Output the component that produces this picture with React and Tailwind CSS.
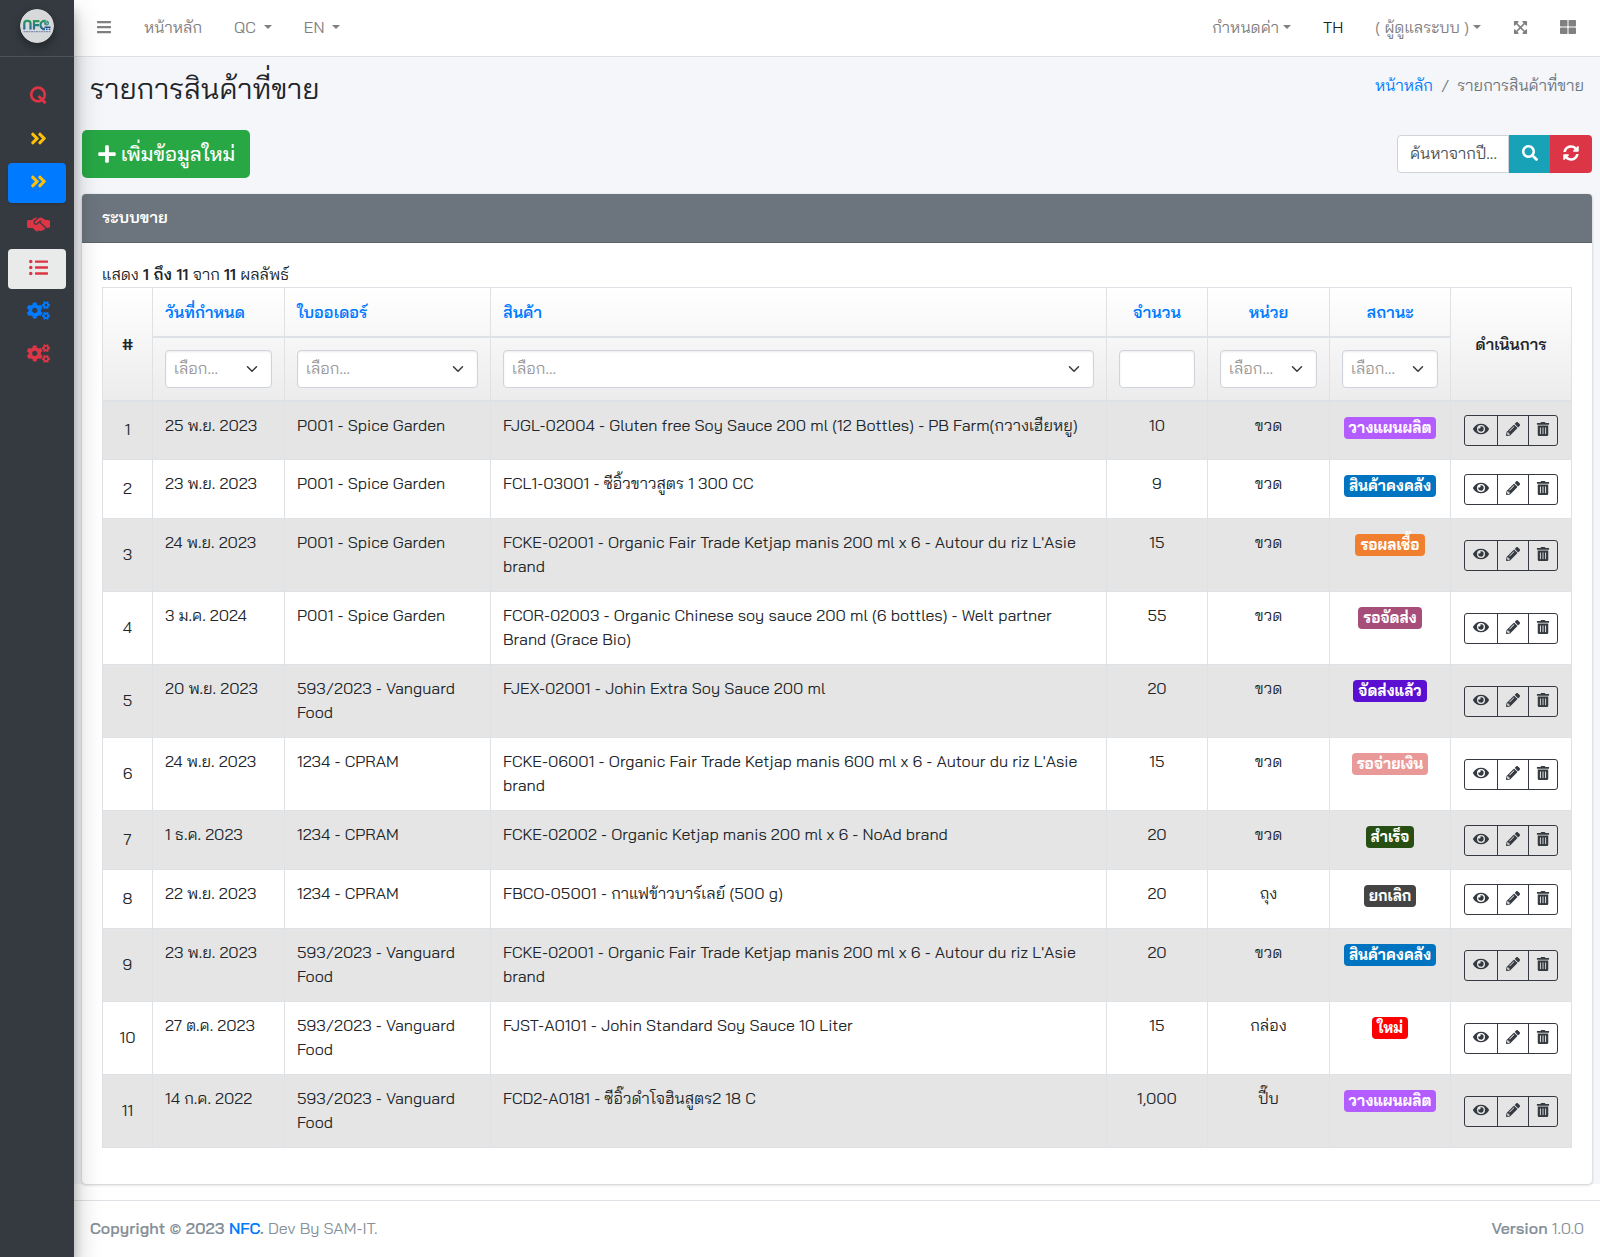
import React from "react";
import {
  FaBars, FaAngleDoubleRight, FaListUl, FaCogs, FaPlus, FaSearch, FaSyncAlt,
  FaExpandArrowsAlt, FaThLarge, FaEye, FaPencilAlt, FaTrashAlt,
} from "react-icons/fa";
import { FaHandshakeSimple } from "react-icons/fa6";

const rows = [
  ["25 พ.ย. 2023", "P001 - Spice Garden", "FJGL-02004 - Gluten free Soy Sauce 200 ml (12 Bottles) - PB Farm(กวางเฮียหยู)", "10", "ขวด", "วางแผนผลิต", "bg-[#b35cff]"],
  ["23 พ.ย. 2023", "P001 - Spice Garden", "FCL1-03001 - ซีอิ้วขาวสูตร 1 300 CC", "9", "ขวด", "สินค้าคงคลัง", "bg-[#0074c1]"],
  ["24 พ.ย. 2023", "P001 - Spice Garden", "FCKE-02001 - Organic Fair Trade Ketjap manis 200 ml x 6 - Autour du riz L'Asie brand", "15", "ขวด", "รอผลเชื้อ", "bg-[#f08030]"],
  ["3 ม.ค. 2024", "P001 - Spice Garden", "FCOR-02003 - Organic Chinese soy sauce 200 ml (6 bottles) - Welt partner Brand (Grace Bio)", "55", "ขวด", "รอจัดส่ง", "bg-[#a64d79]"],
  ["20 พ.ย. 2023", "593/2023 - Vanguard Food", "FJEX-02001 - Johin Extra Soy Sauce 200 ml", "20", "ขวด", "จัดส่งแล้ว", "bg-[#5b0fd0]"],
  ["24 พ.ย. 2023", "1234 - CPRAM", "FCKE-06001 - Organic Fair Trade Ketjap manis 600 ml x 6 - Autour du riz L'Asie brand", "15", "ขวด", "รอจ่ายเงิน", "bg-[#ea9999]"],
  ["1 ธ.ค. 2023", "1234 - CPRAM", "FCKE-02002 - Organic Ketjap manis 200 ml x 6 - NoAd brand", "20", "ขวด", "สำเร็จ", "bg-[#274e13]"],
  ["22 พ.ย. 2023", "1234 - CPRAM", "FBCO-05001 - กาแฟข้าวบาร์เลย์ (500 g)", "20", "ถุง", "ยกเลิก", "bg-[#444444]"],
  ["23 พ.ย. 2023", "593/2023 - Vanguard Food", "FCKE-02001 - Organic Fair Trade Ketjap manis 200 ml x 6 - Autour du riz L'Asie brand", "20", "ขวด", "สินค้าคงคลัง", "bg-[#0074c1]"],
  ["27 ต.ค. 2023", "593/2023 - Vanguard Food", "FJST-A0101 - Johin Standard Soy Sauce 10 Liter", "15", "กล่อง", "ใหม่", "bg-[#ff0000]"],
  ["14 ก.ค. 2022", "593/2023 - Vanguard Food", "FCD2-A0181 - ซีอิ๊วดำโจฮินสูตร2 18 C", "1,000", "ปี๊บ", "วางแผนผลิต", "bg-[#b35cff]"],
];

const columns = ["วันที่กำหนด", "ใบออเดอร์", "สินค้า", "จำนวน", "หน่วย", "สถานะ"];

const menu = [
  { label: "QC", tone: "text-[#dc3545]", icon: <QMark /> },
  { label: "ขั้นตอน 1", tone: "text-[#ffc107]", icon: <FaAngleDoubleRight size={19} /> },
  { label: "ขั้นตอน 2", tone: "bg-[#007bff] text-[#ffc107] shadow", icon: <FaAngleDoubleRight size={19} /> },
  { label: "ลูกค้า", tone: "text-[#dc3545]", icon: <FaHandshakeSimple size={23} /> },
  { label: "รายการ", tone: "bg-[#e9ebea] text-[#dc3545]", icon: <FaListUl size={19} /> },
  { label: "ตั้งค่า", tone: "text-[#007bff]", icon: <FaCogs size={23} /> },
  { label: "ระบบ", tone: "text-[#dc3545]", icon: <FaCogs size={23} /> },
];

function QMark() {
  return (
    <svg width="18" height="18" viewBox="0 0 18 18" fill="none" stroke="currentColor" aria-hidden="true">
      <circle cx="9" cy="8.5" r="6.800" strokeWidth="2.700" />
      <path d="M9.500 10 16.600 17.200" strokeWidth="2.800" />
    </svg>
  );
}

function Caret() {
  return <span aria-hidden="true" className="inline-block border-x-4 border-t-4 border-x-transparent border-t-current" />;
}

function Logo() {
  return (
    <svg width="34" height="34" viewBox="0 0 34 34" className="rounded-full shadow-[0_4px_8px_rgba(0,0,0,0.35)]" role="img" aria-label="NFC">
      <defs>
        <linearGradient id="nfc" gradientUnits="userSpaceOnUse" x1="0" y1="11" x2="0" y2="21">
          <stop offset="0" stopColor="#2c9c5a" />
          <stop offset="1" stopColor="#24609c" />
        </linearGradient>
      </defs>
      <circle cx="17" cy="17" r="17" fill="#d6d8da" />
      <g fill="none" stroke="url(#nfc)" strokeWidth="2.200">
        <path d="M4.300 20.500V14.500q0-2.600 2.400-2.600h1.400q2.400 0 2.400 2.600v6" />
        <path d="M14 20.500v-8.400h5.500M14 16.100h5" />
        <path d="M25 20.200a4.200 4.200 0 1 1 .5-8.300" />
      </g>
      <circle cx="26.500" cy="14" r="2.500" fill="#3f8f86" />
      <path d="M25.500 13.500l1.500-1M26.500 15l1.500-.8" stroke="#d6d8da" strokeWidth=".7" />
      <path d="M24.500 18.200h6M26 20.200h1.500M28.800 20.200h1.500" stroke="#1f4f94" strokeWidth="1.400" />
      <path d="M3.500 22.700h27" stroke="#6d86ad" strokeWidth="1" strokeDasharray="2 .5" />
    </svg>
  );
}

function Picker({ label }) {
  return (
    <div className="relative">
      <select aria-label={label} defaultValue="" className="block h-[38px] w-full appearance-none rounded border border-[#ced4da] bg-white pb-0.5 pl-2 pr-6 font-normal text-[#999999] shadow-[inset_0_1px_2px_rgba(0,0,0,0.075)]">
        <option value="">เลือก...</option>
      </select>
      <svg className="pointer-events-none absolute right-3.5 top-[13px]" width="12" height="12" viewBox="0 0 16 16" fill="none" stroke="#343a40" strokeWidth="2" strokeLinecap="round" strokeLinejoin="round" aria-hidden="true">
        <path d="m2 5 6 6 6-6" />
      </svg>
    </div>
  );
}

const action = "flex h-[31px] items-center justify-center border border-[#343a40] pb-0.5";
const cell = "border border-[#dee2e6] px-3 pt-[11px] pb-[13px] align-top";

export default function App() {
  return (
    <div className="flex min-h-screen bg-white font-['Bai_Jamjuree','Chakra_Petch','Noto_Sans',sans-serif] text-base leading-6 text-[#212529]">
      <aside className="relative z-10 w-[74px] shrink-0 bg-[#343a40] shadow-[0_14px_28px_rgba(0,0,0,0.25),0_10px_10px_rgba(0,0,0,0.22)]">
        <a href="#home" className="flex h-[57px] items-center justify-center border-b border-[#4b545c] pb-1">
          <Logo />
        </a>
        <nav className="flex flex-col gap-[3px] px-2 pt-5">
          {menu.map((m) => (
            <a key={m.label} href="#menu" aria-label={m.label} className={"flex h-10 items-center justify-center rounded pb-1 pl-0.5 " + m.tone}>
              {m.icon}
            </a>
          ))}
        </nav>
      </aside>

      <div className="flex min-w-0 flex-1 flex-col">
        <header className="flex h-[57px] items-center justify-between border-b border-[#dee2e6] pb-0.5 pl-[22px] pr-6 text-[#808080]">
          <nav className="flex items-center gap-8">
            <button aria-label="เมนู"><FaBars size={16} /></button>
            <a href="#home">หน้าหลัก</a>
            <button className="flex items-center gap-2">QC <Caret /></button>
            <button className="flex items-center gap-2">EN <Caret /></button>
          </nav>
          <nav className="flex items-center gap-8">
            <button className="flex items-center gap-1">กำหนดค่า <Caret /></button>
            <a href="#th" className="text-black/90">TH</a>
            <button className="flex items-center gap-1">( ผู้ดูแลระบบ ) <Caret /></button>
            <button aria-label="เต็มจอ"><FaExpandArrowsAlt size={15} /></button>
            <button aria-label="แผงควบคุม"><FaThLarge size={16} /></button>
          </nav>
        </header>

        <main className="bg-[#f4f6f9] px-2">
          <div className="flex justify-between px-2 pt-3.5">
            <h1 className="text-[29px] leading-[34px]">รายการสินค้าที่ขาย</h1>
            <nav className="flex gap-2 pt-0.5 text-[#6c757d]">
              <a href="#home" className="text-[#007bff]">หน้าหลัก</a>
              <span>/</span>
              <span>รายการสินค้าที่ขาย</span>
            </nav>
          </div>

          <div className="mt-[25px] flex items-center justify-between">
            <button className="flex h-12 items-center gap-1 rounded-[5px] bg-[#28a745] px-[15px] text-xl font-medium text-white">
              <FaPlus size={20} />
              เพิ่มข้อมูลใหม่
            </button>
            <form className="flex h-[38px]">
              <input aria-label="ค้นหาจากปี" placeholder="ค้นหาจากปี..." className="w-28 rounded-l border border-[#ced4da] bg-white pb-0.5 pl-3 placeholder:text-[#495057]" />
              <button type="button" aria-label="ค้นหา" className="flex w-[41px] items-center justify-center bg-[#17a2b8] pb-0.5 text-white"><FaSearch size={16} /></button>
              <button type="button" aria-label="รีเฟรช" className="flex w-[42px] items-center justify-center rounded-r bg-[#dc3545] pb-0.5 text-white"><FaSyncAlt size={16} /></button>
            </form>
          </div>

          <section className="mt-4 rounded bg-white shadow-[0_0_1px_rgba(0,0,0,0.125),0_1px_3px_rgba(0,0,0,0.2)]">
            <h2 className="h-[49px] rounded-t border-b border-[#5c646b] bg-[#6c757d] px-5 pt-[11px] font-semibold text-white">ระบบขาย</h2>
            <div className="px-5 pb-9 pt-[19px]">
              <p className="mb-px">แสดง <b className="font-semibold">1 ถึง 11</b> จาก <b className="font-semibold">11</b> ผลลัพธ์</p>
              <table className="w-full table-fixed border-collapse">
                <colgroup>
                  <col className="w-[50px]" />
                  <col className="w-[132px]" />
                  <col className="w-[206px]" />
                  <col />
                  <col className="w-[101px]" />
                  <col className="w-[122px]" />
                  <col className="w-[121px]" />
                  <col className="w-[121px]" />
                </colgroup>
                <thead className="bg-linear-to-b from-white to-[#ececec]">
                  <tr className="h-[49px]">
                    <th rowSpan={2} className="border border-b-2 border-[#dee2e6] font-semibold">#</th>
                    {columns.map((c, i) => (
                      <th key={c} className={"border border-b-2 border-[#dee2e6] px-3 font-semibold " + (i < 3 ? "text-left" : "text-center")}>
                        <a href="#sort" className="text-[#007bff]">{c}</a>
                      </th>
                    ))}
                    <th rowSpan={2} className="border border-b-2 border-[#dee2e6] font-semibold">ดำเนินการ</th>
                  </tr>
                  <tr className="h-16">
                    {columns.map((c) => (
                      <td key={c} className="border border-b-2 border-[#dee2e6] px-3 py-0">
                        {c === "จำนวน" ? (
                          <input aria-label={c} className="block h-[38px] w-full rounded border border-[#ced4da] bg-white px-2 shadow-[inset_0_1px_2px_rgba(0,0,0,0.075)]" />
                        ) : (
                          <Picker label={c} />
                        )}
                      </td>
                    ))}
                  </tr>
                </thead>
                <tbody>
                  {rows.map(([date, order, product, qty, unit, status, tone], i) => (
                    <tr key={i} className="h-[59px] odd:bg-[#e5e5e5]">
                      <td className="border border-[#dee2e6] pb-0.5 text-center align-middle">{i + 1}</td>
                      <td className={cell}>{date}</td>
                      <td className={cell}>{order}</td>
                      <td className={cell}>{product}</td>
                      <td className={cell + " text-center"}>{qty}</td>
                      <td className={cell + " text-center"}>{unit}</td>
                      <td className="border border-[#dee2e6] pt-[15px] text-center align-top">
                        <span className={"mx-auto block h-[22px] w-fit whitespace-nowrap rounded px-[5px] text-[15px] leading-[21px] font-bold text-white " + tone}>{status}</span>
                      </td>
                      <td className="border border-[#dee2e6] pl-3 align-middle text-[#343a40]">
                        <div className="flex pl-px">
                          <button aria-label="ดู" className={action + " w-[34px] rounded-l-[3px]"}><FaEye size={16} /></button>
                          <button aria-label="แก้ไข" className={action + " -ml-px w-8"}><FaPencilAlt size={14} /></button>
                          <button aria-label="ลบ" className={action + " -ml-px w-[30px] rounded-r-[3px]"}><FaTrashAlt size={14} /></button>
                        </div>
                      </td>
                    </tr>
                  ))}
                </tbody>
              </table>
            </div>
          </section>
        </main>

        <footer className="mt-4 flex flex-1 items-start justify-between border-t border-[#dee2e6] px-4 pt-[15px] text-[#869099]">
          <p><b className="font-semibold">Copyright © 2023 <a href="#nfc" className="text-[#007bff]">NFC</a>.</b> Dev By SAM-IT.</p>
          <p><b className="font-semibold">Version</b> 1.0.0</p>
        </footer>
      </div>
    </div>
  );
}
